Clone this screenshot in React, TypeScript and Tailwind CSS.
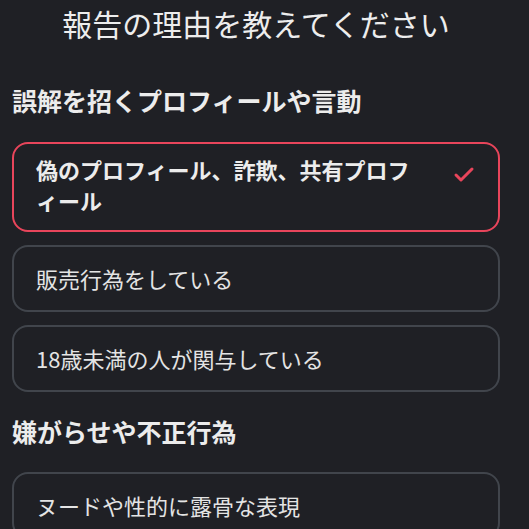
import React from 'react';
import { Check } from 'lucide-react';

const FONT = { fontFamily: '"Noto Sans CJK JP", "Noto Sans", sans-serif' };

interface ReasonProps {
  label: string;
  selected?: boolean;
}

const Reason: React.FC<ReasonProps> = ({ label, selected }) => {
  return (
    <div
      className={
        selected
          ? 'flex items-start gap-6 rounded-2xl border-2 border-[#e8455b] pl-[22px] pr-[22px] py-[12px]'
          : 'flex items-start gap-6 rounded-2xl border-2 border-[#41454c] pl-[22px] pr-[22px] py-[16px]'
      }
    >
      <p
        className={
          selected
            ? 'flex-1 text-[22px] leading-[31px] font-bold text-[#ececec] -mt-[2px] mb-[2px]'
            : 'flex-1 text-[22px] leading-[31px] text-[#e4e4e4]'
        }
      >
        {label}
      </p>
      {selected && (
        <div className="h-[31px] flex items-center pt-[6px]">
          <Check className="w-6 h-6 text-[#e8455b]" strokeWidth={3} />
        </div>
      )}
    </div>
  );
};

const App: React.FC = () => {
  return (
    <div className="w-[529px] h-[529px] overflow-hidden bg-[#1f2025]" style={FONT}>
      <div className="w-[488px] ml-3 pt-[3px] flex flex-col">
        <h1 className="text-center text-[30px] leading-[40px] text-[#ededed]">報告の理由を教えてください</h1>
        <h2 className="mt-[40px] mb-[25px] text-[25px] leading-[34px] font-semibold text-[#ececec]">
          誤解を招くプロフィールや言動
        </h2>
        <div className="flex flex-col gap-[13px]">
          <Reason label="偽のプロフィール、詐欺、共有プロフィール" selected />
          <Reason label="販売行為をしている" />
          <Reason label="18歳未満の人が関与している" />
        </div>
        <h2 className="mt-[22px] mb-[24px] text-[25px] leading-[34px] font-semibold text-[#ececec]">
          嫌がらせや不正行為
        </h2>
        <Reason label="ヌードや性的に露骨な表現" />
      </div>
    </div>
  );
};

export default App;
